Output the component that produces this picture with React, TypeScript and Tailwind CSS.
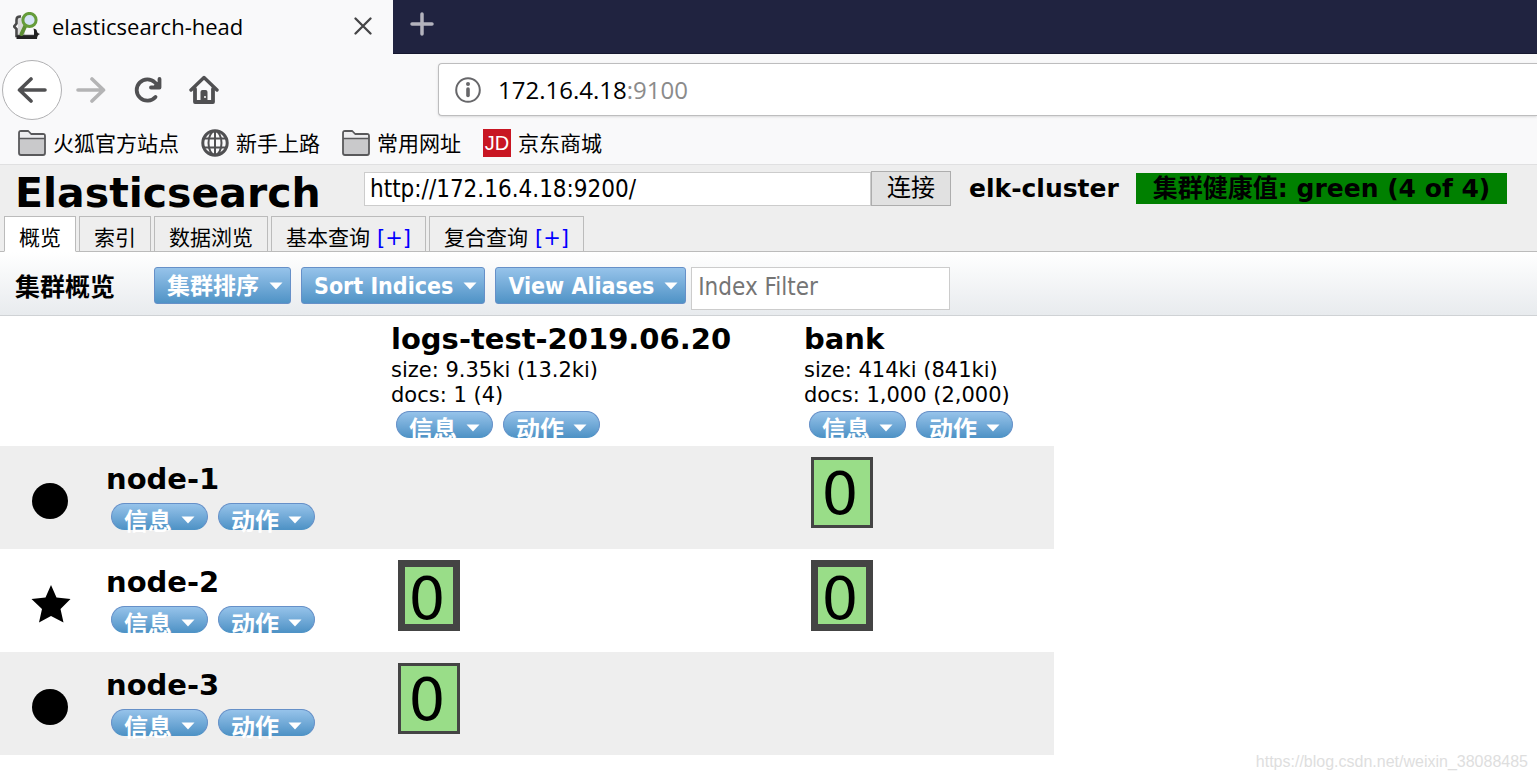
import type { ReactNode } from "react";

const tabs = [
  { label: "概览", active: true },
  { label: "索引" },
  { label: "数据浏览" },
  { label: "基本查询", plus: true },
  { label: "复合查询", plus: true },
];

const indices = [
  { name: "logs-test-2019.06.20", size: "9.35ki (13.2ki)", docs: "1 (4)" },
  { name: "bank", size: "414ki (841ki)", docs: "1,000 (2,000)" },
];

type Shard = "primary" | "replica" | null;

const nodes: { name: string; master: boolean; shards: Shard[] }[] = [
  { name: "node-1", master: false, shards: [null, "replica"] },
  { name: "node-2", master: true, shards: ["primary", "primary"] },
  { name: "node-3", master: false, shards: ["replica", null] },
];

function Caret() {
  return (
    <svg width="14" height="8" viewBox="0 0 14 8" className="shrink-0" aria-hidden="true">
      <path d="M0.5 0.5h13L7 7.5z" fill="#fff" />
    </svg>
  );
}

function Pill({ children }: { children: ReactNode }) {
  return (
    <button className="flex h-[27px] w-[97px] items-start justify-center gap-[9px] rounded-full border border-b-[#4f93c6] border-[#6690c8] bg-linear-to-b from-[#96c3ea] to-[#4f93c6] pt-[3px] font-bold text-white">
      <span className="text-[24px] leading-[30px]">{children}</span>
      <svg width="14" height="27" viewBox="0 0 14 27" className="shrink-0" aria-hidden="true">
        <path d="M0.5 9.500h13L7 16.500z" fill="#fff" />
      </svg>
    </button>
  );
}

function PillPair() {
  return (
    <div className="flex gap-[10px] pl-[5px]">
      <Pill>信息</Pill>
      <Pill>动作</Pill>
    </div>
  );
}

function MenuButton({ children }: { children: ReactNode }) {
  return (
    <button className="flex h-[37px] items-center gap-[10px] rounded-[3px] border border-[#6690c8] bg-linear-to-b from-[#96c3ea] to-[#4f93c6] pr-[7px] pl-3 text-[23px] leading-[30px] font-bold whitespace-nowrap text-white">
      {children}
      <Caret />
    </button>
  );
}

function Folder() {
  return (
    <svg width="28" height="26" viewBox="0 0 28 26" aria-hidden="true">
      <path d="M1 23V3Q1 1 3 1H10L13 4H25Q27 4 27 6V23Q27 25 25 25H3Q1 25 1 23Z" fill="#c9c9cb" stroke="#59595b" strokeWidth="1.8" />
      <path d="M2 8V2H10L13 5H26V8Z" fill="#ececee" />
      <path d="M1 8.5H27" stroke="#59595b" strokeWidth="1.5" />
    </svg>
  );
}

function Globe() {
  return (
    <svg width="28" height="28" viewBox="0 0 28 28" fill="none" stroke="#505052" aria-hidden="true">
      <circle cx="14" cy="14" r="12.2" strokeWidth="3" />
      <ellipse cx="14" cy="14" rx="6.5" ry="12" strokeWidth="2" />
      <path d="M14 2V26M3 9.5H25M3 18.5H25" strokeWidth="2" />
    </svg>
  );
}

function JdLogo() {
  return (
    <span className="flex size-7 items-center justify-center bg-[#c81623] font-['Liberation_Sans',sans-serif] text-[20px] leading-7 text-white" aria-hidden="true">
      JD
    </span>
  );
}

function Favicon() {
  return (
    <svg width="28" height="28" viewBox="0 0 28 28" fill="none" aria-hidden="true">
      <path d="M5 5H12V24H5Z" fill="#d9d9d9" />
      <path d="M8 4.500Q3.500 4 3.500 8V11.500L1 14.500L3.500 17V24H22.500" stroke="#4a4a4a" strokeWidth="2.600" />
      <path d="M20.500 16.500Q24 17 24 19.500Q24 21 27 22Q24 23 24 27H3.500V23.500H21V19Z" fill="#222" />
      <path d="M12.500 13.500L8.500 22" stroke="#5d8f34" strokeWidth="4" strokeLinecap="round" />
      <circle cx="16.500" cy="8" r="6.600" fill="#d5e4f6" stroke="#659c3a" strokeWidth="3" />
    </svg>
  );
}

const bookmarks = [
  { label: "火狐官方站点", icon: <Folder /> },
  { label: "新手上路", icon: <Globe /> },
  { label: "常用网址", icon: <Folder /> },
  { label: "京东商城", icon: <JdLogo /> },
];

function Browser() {
  return (
    <div className="border-b border-[#e0e0e1] bg-[#f9f9fa] font-['Open_Sans','Noto_Sans_CJK_SC',sans-serif] text-black">
      <div className="flex h-[54px] border-b border-[#15172f] bg-[#202340]">
        <div className="-mb-px flex w-[393px] items-center bg-[#f9f9fa] pr-[21px] pb-[2px] pl-[13px]">
          <Favicon />
          <span className="flex-1 pl-[11px] text-[22px] leading-[30px]">elasticsearch-head</span>
          <button aria-label="Close tab">
            <svg width="18" height="18" viewBox="0 0 18 18" stroke="#454547" strokeWidth="2.300" strokeLinecap="round">
              <path d="M1.500 1.500L16.500 16.500M16.500 1.500L1.500 16.500" />
            </svg>
          </button>
        </div>
        <button aria-label="New tab" className="px-[17px] pb-[6px]">
          <svg width="24" height="24" viewBox="0 0 24 24" stroke="#b3b3bd" strokeWidth="3.500" strokeLinecap="round">
            <path d="M12 2V22M2 12H22" />
          </svg>
        </button>
      </div>
      <div className="flex h-[71px] items-center">
        <div className="flex w-[438px] items-center pl-[2px]">
          <button aria-label="Back" className="flex size-[60px] items-center justify-center rounded-full border border-[#b1b1b3] bg-white">
            <svg width="30" height="26" viewBox="0 0 30 26" fill="none" stroke="#505052" strokeWidth="3.600" strokeLinecap="round" strokeLinejoin="round">
              <path d="M28 13H2.500M14 2L2.500 13L14 24" />
            </svg>
          </button>
          <button aria-label="Forward" className="ml-[14px]">
            <svg width="30" height="26" viewBox="0 0 30 26" fill="none" stroke="#b4b4b5" strokeWidth="3.600" strokeLinecap="round" strokeLinejoin="round">
              <path d="M2 13H27.500M16 2L27.500 13L16 24" />
            </svg>
          </button>
          <button aria-label="Reload" className="ml-[28px]">
            <svg width="28" height="26" viewBox="0 0 28 26" fill="none" stroke="#505052" strokeWidth="3.800" strokeLinecap="round" strokeLinejoin="round">
              <path d="M21.500 20A10.700 10.700 0 1 1 21 5.500L24 9" />
              <path d="M25.500 2V10.500H17" />
              <path d="M25.500 4V10.500H19Z" fill="#505052" strokeWidth="1" />
            </svg>
          </button>
          <button aria-label="Home" className="ml-[27px]">
            <svg width="30" height="30" viewBox="0 0 30 30" fill="none" stroke="#505052" strokeLinecap="round" strokeLinejoin="round">
              <path d="M2 15L15 2.500L28 15" strokeWidth="3.400" />
              <path d="M6 14V27H24V14" strokeWidth="3.800" />
              <path d="M11.500 27V17Q11.500 15 13.500 15H16.500Q18.500 15 18.500 17V27Z" fill="#505052" stroke="none" />
              <circle cx="16" cy="22" r="1" fill="#fff" stroke="none" />
            </svg>
          </button>
        </div>
        <div className="flex h-[53px] flex-1 items-center rounded-l-[4px] border border-r-0 border-[#bdbdbe] bg-white pl-4 text-[24px] leading-8 shadow-sm">
          <svg width="26" height="26" viewBox="0 0 26 26" fill="none" stroke="#67676a" aria-hidden="true">
            <circle cx="13" cy="13" r="11.800" strokeWidth="2" />
            <path d="M13 12V18.500" strokeWidth="3.600" strokeLinecap="round" />
            <circle cx="13" cy="7" r="2" fill="#67676a" stroke="none" />
          </svg>
          <span className="pl-[17px]">
            172.16.4.18<span className="text-[#8b8b8b]">:9100</span>
          </span>
        </div>
      </div>
      <div className="flex h-[39px] items-start gap-[22px] pt-[3px] pl-[18px]">
        {bookmarks.map((b) => (
          <a key={b.label} href="#" className="flex items-center gap-[7px] text-[21px] leading-[30px] whitespace-nowrap">
            {b.icon}
            {b.label}
          </a>
        ))}
      </div>
    </div>
  );
}

function Header() {
  return (
    <header className="border-b border-[#bbb] bg-[#eee]">
      <div className="flex h-[51px] items-start pl-[15px]">
        <h1 className="w-[349px] pt-[5px] text-[41px] leading-[46px] font-bold">Elasticsearch</h1>
        <div className="flex items-end pt-[6px] font-['DejaVu_Sans_Condensed','Noto_Sans_CJK_SC',sans-serif] text-[24px]">
          <input aria-label="Cluster address" defaultValue="http://172.16.4.18:9200/" className="h-[34px] w-[507px] border border-[#ccc] bg-white px-[5px]" />
          <button className="h-[35px] w-[80px] border border-[#adadad] bg-[#e1e1e1] leading-[33px]">连接</button>
        </div>
        <span className="pt-2 pl-[18px] text-[25px] leading-[31px] font-bold whitespace-nowrap">elk-cluster</span>
        <span className="mt-2 ml-[17px] bg-[green] px-[17px] text-[25px] leading-[31px] font-bold whitespace-nowrap">
          集群健康值: green (4 of 4)
        </span>
      </div>
      <nav className="-mb-px flex gap-[3px] pl-1">
        {tabs.map((t) => (
          <div
            key={t.label}
            className={
              t.active
                ? "flex h-[36px] items-end gap-[7px] border border-[#bbb] border-b-white bg-white px-[14px] text-[21px] leading-[25px]"
                : "flex h-[36px] items-end gap-[7px] border border-[#bbb] px-[14px] text-[21px] leading-[25px]"
            }
          >
            <button>{t.label}</button>
            {t.plus && (
              <a href="#" className="text-[#00f]">
                [+]
              </a>
            )}
          </div>
        ))}
      </nav>
    </header>
  );
}

function Toolbar() {
  return (
    <div className="flex h-[64px] items-start border-b border-[#cfd2d5] bg-linear-to-b from-white to-[#e8ebee] pt-[15px] pl-[15px] font-['DejaVu_Sans_Condensed','Noto_Sans_CJK_SC',sans-serif]">
      <h2 className="w-[139px] text-[25px] leading-[41px] font-bold">集群概览</h2>
      <div className="flex gap-[10px]">
        <MenuButton>集群排序</MenuButton>
        <MenuButton>Sort Indices</MenuButton>
        <MenuButton>View Aliases</MenuButton>
      </div>
      <input aria-label="Index filter" placeholder="Index Filter" className="ml-[5px] h-[43px] w-[259px] border border-[#ccc] bg-white px-[6px] pb-1 text-[24px] placeholder:text-[#757575]" />
    </div>
  );
}

function ShardBox({ kind }: { kind: Shard }) {
  if (!kind) return null;
  return (
    <button
      className={
        kind === "primary"
          ? "block h-[71px] w-[62px] border-[7px] border-[#444] bg-[#99dd88] pt-1 pr-[4px] text-[58px] leading-[57px]"
          : "block h-[71px] w-[62px] border-[3px] border-[#444] bg-[#99dd88] pt-1 pr-[4px] text-[58px] leading-[61px]"
      }
    >
      0
    </button>
  );
}

function Overview() {
  return (
    <table className="w-[1054px] table-fixed border-collapse text-left">
      <colgroup>
        <col className="w-[106px]" />
        <col className="w-[285px]" />
        <col className="w-[413px]" />
        <col />
      </colgroup>
      <thead>
        <tr className="h-[130px]">
          <td colSpan={2} />
          {indices.map((i) => (
            <th key={i.name} scope="col" className="pt-[5px] align-top font-normal">
              <div className="pb-px text-[29px] leading-[36px] font-bold">{i.name}</div>
              <div className="text-[21px] leading-[25px]">size: {i.size}</div>
              <div className="pb-[3px] text-[21px] leading-[25px]">docs: {i.docs}</div>
              <PillPair />
            </th>
          ))}
        </tr>
      </thead>
      <tbody>
        {nodes.map((n) => (
          <tr key={n.name} className="h-[103px] odd:bg-[#eee]">
            <td className="pt-[6px] pl-[31px] align-middle">
              {n.master ? (
                <svg width="40" height="38" viewBox="0 0 40 38" role="img" aria-label="master">
                  <path d="M20 0L25.500 12.500L39.500 14L29.500 24L32.500 37.500L20 31L8 37.500L11 24L0.500 14L14.500 12.500Z" />
                </svg>
              ) : (
                <svg width="38" height="38" viewBox="0 0 38 38" role="img" aria-label="data node">
                  <circle cx="19" cy="19" r="18" />
                </svg>
              )}
            </td>
            <th scope="row" className="pt-[15px] align-top font-normal">
              <div className="pb-[6px] text-[29px] leading-[36px] font-bold">{n.name}</div>
              <PillPair />
            </th>
            {n.shards.map((s, k) => (
              <td key={k} className="pt-[11px] pl-[7px] align-top">
                <ShardBox kind={s} />
              </td>
            ))}
          </tr>
        ))}
      </tbody>
    </table>
  );
}

export default function App() {
  return (
    <div className="relative min-h-screen bg-white font-['DejaVu_Sans','Noto_Sans_CJK_SC',sans-serif] text-black">
      <Browser />
      <Header />
      <Toolbar />
      <Overview />
      <div className="absolute right-[9px] bottom-[7px] font-['Liberation_Sans',sans-serif] text-[16px] leading-5 text-[#dedede]">
        https://blog.csdn.net/weixin_38088485
      </div>
    </div>
  );
}
